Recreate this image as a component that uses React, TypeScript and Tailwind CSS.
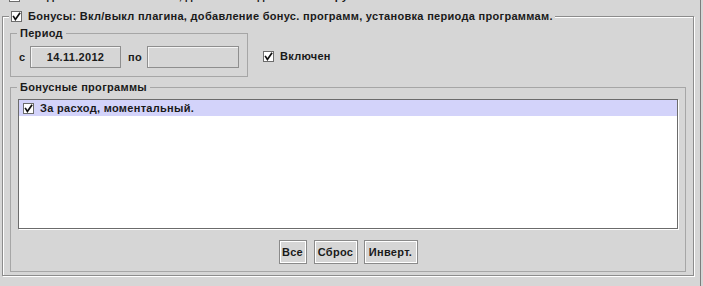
import React from 'react';

// Флажок в стиле Swing
const Check: React.FC<{ checked?: boolean }> = ({ checked = true }) => (
  <span className="w-[11px] h-[11px] shrink-0 border border-[#6c6c6c] bg-white flex items-center justify-center">
    {checked && (
      <svg width="9" height="9" viewBox="0 0 9 9">
        <path d="M1.6 4.6 L3.4 7.4 L7.6 1.4" fill="none" stroke="#111" strokeWidth="1.7" strokeLinecap="square" />
      </svg>
    )}
  </span>
);

// Рамка с заголовком
const TitledBox: React.FC<{ title: React.ReactNode; className?: string; children?: React.ReactNode }> = ({ title, className = '', children }) => (
  <div className={`relative border border-[#a6a6a6] ${className}`}>
    <div className="absolute left-[6px] top-[-8px] h-[14px] px-[3px] bg-[#d6d6d6] flex items-center">{title}</div>
    {children}
  </div>
);

const Field: React.FC<{ value?: string; className?: string }> = ({ value = '', className = '' }) => (
  <div className={`h-[22px] border border-[#8e8e8e] shadow-[inset_1px_1px_0_#f4f4f4] flex items-center justify-center ${className}`}>
    {value}
  </div>
);

const Btn: React.FC<{ label: string; className?: string }> = ({ label, className = '' }) => (
  <button className={`h-[24px] border border-[#8a8a8a] shadow-[inset_1px_1px_0_#fff,inset_-1px_-1px_0_#fff] flex items-center justify-center ${className}`}>
    {label}
  </button>
);

export default function App() {
  return (
    <div
      className="w-[703px] h-[286px] bg-[#d6d6d6] overflow-hidden text-[11px] font-bold text-[#1a1a1a] leading-none tracking-[0.3px]"
      style={{ fontFamily: '"Liberation Sans", Arial, sans-serif' }}
    >
      <div className="w-[701px] h-full border-r border-[#7c7c7c]">
        {/* обрезанная строка сверху */}
        <div className="h-[3px] overflow-hidden">
          <div className="-mt-[10px] h-[13px] flex items-center gap-[6px] pl-[9px]">
            <Check checked={false} />
            <span>Скидки: Вкл/выкл плагина, добавление дисконтных групп</span>
          </div>
        </div>

        {/* Бонусы */}
        <div className="relative mt-[13px] ml-[2px] w-[692px] h-[260px] border border-[#8c8c8c] shadow-[inset_1px_1px_0_#fff,1px_1px_0_#fff]">
          <div className="absolute left-[6px] top-[-7px] h-[13px] px-[2px] bg-[#d6d6d6] flex items-center gap-[6px]">
            <Check />
            <span>Бонусы: Вкл/выкл плагина, добавление бонус. программ, установка периода программам.</span>
          </div>

          <div className="flex items-start mt-[16px] ml-[7px]">
            <TitledBox title="Период" className="w-[238px] h-[44px]">
              <div className="flex items-center pt-[12px] pl-[8px]">
                <span className="w-[11px]">с</span>
                <Field value="14.11.2012" className="w-[91px]" />
                <span className="w-[19px] ml-[7px]">по</span>
                <Field className="w-[92px]" />
              </div>
            </TitledBox>
            <div className="flex items-center gap-[6px] ml-[15px] mt-[18px]">
              <Check />
              <span>Включен</span>
            </div>
          </div>

          <TitledBox title="Бонусные программы" className="mt-[10px] ml-[7px] w-[676px] h-[185px]">
            <div className="mt-[11px] ml-[7px] w-[660px] h-[130px] bg-white border border-[#6b6b6b] shadow-[1px_1px_0_#fff]">
              <div className="h-[16px] bg-[#d3d3fa] flex items-center gap-[6px] pl-[4px]">
                <Check />
                <span>За расход, моментальный.</span>
              </div>
            </div>
            <div className="flex justify-center mt-[11px]">
              <Btn label="Все" className="w-[28px]" />
              <Btn label="Сброс" className="w-[44px] ml-[7px]" />
              <Btn label="Инверт." className="w-[54px] ml-[6px]" />
            </div>
          </TitledBox>
        </div>
      </div>
    </div>
  );
}
